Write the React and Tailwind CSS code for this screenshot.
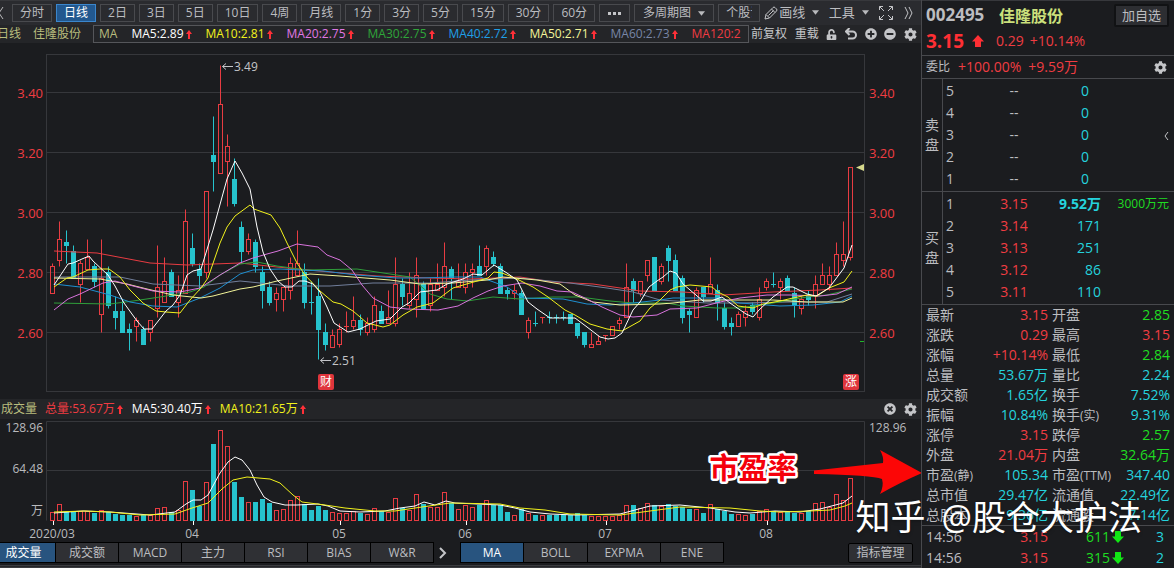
import React from 'react'
import { FaCog, FaMinusCircle, FaPlusCircle, FaTimesCircle, FaUnlockAlt } from 'react-icons/fa'

const UP = '#e83c42'
const DOWN = '#26c3cd'

const periods = ['分时', '日线', '2日', '3日', '5日', '10日', '4周', '月线', '1分', '3分', '5分', '15分', '30分', '60分']

const averages = [
    { label: 'MA5:2.89', color: 'text-white' },
    { label: 'MA10:2.81', color: 'text-[#f2f21c]' },
    { label: 'MA20:2.75', color: 'text-[#e078e4]' },
    { label: 'MA30:2.75', color: 'text-[#2fa53a]' },
    { label: 'MA40:2.72', color: 'text-[#1fa0e8]' },
    { label: 'MA50:2.71', color: 'text-[#f3f59a]' },
    { label: 'MA60:2.73', color: 'text-[#7886a6]' },
]

// [direction, high, body top, body bottom, low, volume bar height]
const candles = [
    [1, 2.83, 2.82, 2.73, 2.73, 8], [1, 2.97, 2.91, 2.84, 2.82, 16], [0, 2.94, 2.9, 2.89, 2.83, 8],
    [0, 2.89, 2.87, 2.78, 2.78, 8], [1, 2.84, 2.83, 2.76, 2.7, 9], [1, 2.91, 2.85, 2.81, 2.81, 9],
    [0, 2.83, 2.82, 2.77, 2.75, 7], [1, 2.91, 2.78, 2.66, 2.6, 10], [0, 2.82, 2.8, 2.69, 2.68, 8],
    [0, 2.72, 2.67, 2.65, 2.61, 6], [0, 2.71, 2.67, 2.6, 2.6, 5], [0, 2.63, 2.61, 2.6, 2.54, 5],
    [1, 2.65, 2.64, 2.62, 2.57, 4], [0, 2.62, 2.61, 2.56, 2.56, 5], [1, 2.64, 2.64, 2.6, 2.57, 5],
    [1, 2.89, 2.75, 2.68, 2.65, 12], [1, 2.85, 2.77, 2.7, 2.7, 13], [0, 2.81, 2.8, 2.72, 2.72, 8],
    [1, 2.79, 2.74, 2.7, 2.65, 10], [1, 3.01, 2.97, 2.73, 2.73, 39], [0, 2.93, 2.88, 2.83, 2.82, 30],
    [0, 2.83, 2.81, 2.79, 2.74, 14], [1, 3.07, 3.07, 2.8, 2.78, 38], [0, 3.32, 3.19, 3.17, 3.07, 76],
    [1, 3.49, 3.36, 3.13, 3.13, 90], [1, 3.26, 3.22, 3.17, 3.02, 74], [0, 3.18, 3.11, 3.03, 3.02, 38],
    [0, 2.97, 2.95, 2.87, 2.83, 23], [1, 2.93, 2.91, 2.87, 2.86, 18], [0, 2.91, 2.9, 2.82, 2.8, 18],
    [0, 2.82, 2.8, 2.74, 2.68, 21], [0, 2.77, 2.75, 2.7, 2.69, 17], [1, 2.75, 2.73, 2.71, 2.67, 10],
    [1, 2.75, 2.75, 2.71, 2.67, 11], [1, 2.85, 2.83, 2.74, 2.71, 20], [1, 2.94, 2.83, 2.79, 2.79, 24],
    [0, 2.83, 2.8, 2.7, 2.68, 16], [0, 2.77, 2.7, 2.7, 2.66, 10], [0, 2.78, 2.72, 2.61, 2.51, 14],
    [0, 2.63, 2.6, 2.56, 2.54, 10], [1, 2.61, 2.59, 2.55, 2.55, 8], [1, 2.63, 2.61, 2.56, 2.55, 7],
    [1, 2.67, 2.62, 2.62, 2.6, 7], [1, 2.72, 2.64, 2.62, 2.61, 9], [0, 2.66, 2.64, 2.61, 2.59, 7],
    [1, 2.65, 2.63, 2.6, 2.59, 6], [1, 2.72, 2.69, 2.61, 2.6, 12], [0, 2.69, 2.67, 2.63, 2.63, 9],
    [1, 2.74, 2.65, 2.63, 2.63, 8], [1, 2.85, 2.76, 2.63, 2.62, 22], [0, 2.78, 2.76, 2.72, 2.69, 12],
    [1, 2.8, 2.73, 2.69, 2.68, 10], [1, 2.85, 2.79, 2.71, 2.65, 26], [0, 2.77, 2.76, 2.68, 2.68, 16],
    [1, 2.78, 2.76, 2.69, 2.67, 13], [1, 2.83, 2.76, 2.74, 2.74, 13], [1, 2.9, 2.82, 2.75, 2.72, 28],
    [0, 2.82, 2.81, 2.78, 2.71, 17], [1, 2.83, 2.77, 2.75, 2.75, 11], [1, 2.83, 2.8, 2.75, 2.73, 15],
    [1, 2.83, 2.81, 2.8, 2.75, 13], [0, 2.89, 2.82, 2.79, 2.79, 15], [1, 2.89, 2.88, 2.82, 2.79, 20],
    [0, 2.87, 2.85, 2.83, 2.82, 15], [0, 2.83, 2.82, 2.73, 2.73, 15], [0, 2.75, 2.74, 2.73, 2.71, 8],
    [1, 2.76, 2.74, 2.73, 2.71, 5], [0, 2.74, 2.73, 2.66, 2.66, 11], [1, 2.65, 2.64, 2.6, 2.58, 7],
    [0, 2.67, 2.63, 2.63, 2.62, 5], [1, 2.65, 2.65, 2.65, 2.63, 5], [0, 2.67, 2.65, 2.65, 2.63, 5],
    [0, 2.66, 2.65, 2.65, 2.63, 5], [0, 2.67, 2.65, 2.65, 2.64, 5], [0, 2.66, 2.66, 2.63, 2.63, 5],
    [0, 2.63, 2.63, 2.59, 2.58, 7], [0, 2.6, 2.6, 2.56, 2.55, 5], [1, 2.6, 2.56, 2.55, 2.55, 4],
    [1, 2.59, 2.57, 2.56, 2.56, 4], [1, 2.59, 2.59, 2.59, 2.57, 4], [1, 2.62, 2.62, 2.59, 2.59, 4],
    [1, 2.65, 2.64, 2.63, 2.61, 5], [1, 2.83, 2.75, 2.65, 2.65, 15], [0, 2.78, 2.77, 2.74, 2.7, 15],
    [1, 2.77, 2.77, 2.73, 2.72, 12], [1, 2.84, 2.84, 2.79, 2.77, 17], [0, 2.85, 2.85, 2.74, 2.74, 15],
    [1, 2.83, 2.82, 2.77, 2.76, 14], [0, 2.89, 2.88, 2.84, 2.77, 16], [0, 2.86, 2.84, 2.74, 2.74, 14],
    [0, 2.79, 2.78, 2.65, 2.63, 13], [0, 2.68, 2.67, 2.66, 2.6, 11], [1, 2.75, 2.74, 2.65, 2.65, 11],
    [0, 2.75, 2.75, 2.72, 2.7, 7], [1, 2.85, 2.76, 2.73, 2.73, 16], [0, 2.76, 2.74, 2.7, 2.64, 11],
    [0, 2.7, 2.68, 2.62, 2.61, 9], [0, 2.65, 2.63, 2.62, 2.59, 6], [1, 2.67, 2.66, 2.62, 2.62, 6],
    [1, 2.69, 2.67, 2.65, 2.62, 5], [0, 2.7, 2.69, 2.67, 2.66, 6], [1, 2.75, 2.71, 2.65, 2.64, 9],
    [1, 2.78, 2.77, 2.75, 2.74, 11], [0, 2.8, 2.76, 2.76, 2.75, 9], [1, 2.78, 2.77, 2.75, 2.71, 8],
    [0, 2.79, 2.78, 2.74, 2.74, 8], [0, 2.75, 2.73, 2.69, 2.65, 7], [1, 2.72, 2.71, 2.68, 2.66, 7],
    [0, 2.74, 2.72, 2.71, 2.69, 9], [1, 2.79, 2.76, 2.72, 2.68, 17], [1, 2.83, 2.79, 2.76, 2.76, 18],
    [1, 2.82, 2.79, 2.76, 2.74, 13], [1, 2.9, 2.86, 2.79, 2.79, 26], [1, 2.97, 2.86, 2.84, 2.82, 20],
    [1, 3.15, 3.15, 2.85, 2.84, 42],
]

const priceLines = [
    { color: '#e83c42', points: '54,251 97,253 150,263 187,265 240,263 277,267 330,272 377,276 430,278 470,279 520,277 553,282 593,284 627,289 640,291 683,292 723,295 773,292 820,290 852,288' },
    { color: '#727f9c', points: '54,277 120,277 153,284 200,286 240,281 290,286 330,286 373,283 430,283 470,280 520,278 570,283 607,288 633,292 660,300 707,303 740,303 790,302 827,302 852,294' },
    { color: '#2f9e3a', points: '54,303 110,304 133,301 160,297 190,292 204,287 220,275 240,264 257,262 277,266 307,270 357,269 390,274 410,277 430,294 447,299 467,301 493,297 520,299 553,297 580,297 610,301 633,303 667,303 683,306 717,308 740,308 773,303 807,297 827,295 852,289' },
    { color: '#1f8fd0', points: '54,284 80,287 110,295 130,302 153,306 177,307 200,298 220,288 240,274 253,270 280,269 323,271 357,275 397,278 420,278 453,277 480,277 507,287 523,298 563,299 587,304 610,305 633,303 660,300 673,298 717,298 740,303 780,306 813,305 840,302 852,296' },
    { color: '#f3f59a', points: '54,278 100,279 127,284 147,289 173,295 201,298 213,296 240,289 253,287 277,281 310,274 340,276 390,280 420,284 453,283 487,280 503,277 537,280 560,284 575,295 593,302 620,305 660,304 673,303 700,300 773,300 807,302 843,302 852,298' },
    { color: '#d873dc', points: '54,310 68,299 80,294 103,283 115,281 133,286 153,291 180,292 200,288 220,275 240,263 253,258 267,254 278,251 297,244 318,247 327,255 340,260 352,270 362,285 373,298 390,307 407,309 438,310 458,306 473,298 488,291 503,286 522,283 540,286 557,291 572,292 587,299 602,307 620,315 633,317 657,315 670,309 697,308 720,302 740,298 767,295 790,295 820,296 837,294 852,287' },
    { color: '#f2f21c', points: '54,287 67,278 73,277 88,270 100,269 109,269 120,277 130,290 143,303 156,311 166,312 180,313 190,300 201,288 208,278 220,243 227,227 235,216 250,205 254,209 271,215 280,228 287,243 297,263 305,275 320,291 333,302 341,304 353,311 367,323 383,327 390,325 403,315 417,307 433,303 453,288 470,283 488,278 494,272 502,273 517,279 533,287 548,297 565,310 575,315 590,324 607,329 622,331 640,321 650,308 660,300 670,290 677,287 690,285 712,287 718,292 728,297 738,306 753,308 763,304 780,301 793,298 807,295 817,296 829,288 844,282 852,271' },
    { color: '#ffffff', points: '54,285 68,264 73,263 82,259 89,256 93,261 108,275 115,286 124,303 137,321 144,329 152,329 166,311 173,305 180,295 187,275 193,271 201,269 213,230 227,179 235,161 242,173 250,189 257,227 263,252 270,269 278,281 285,287 292,287 299,281 305,281 313,284 320,292 327,307 334,323 348,332 360,329 376,321 390,319 402,307 409,303 420,292 437,290 447,284 463,279 473,274 482,275 494,265 507,273 517,280 528,302 537,309 550,318 575,318 587,327 600,337 608,339 615,338 622,333 633,310 640,302 649,287 657,281 663,277 670,271 676,273 683,284 703,301 711,301 722,297 730,303 746,314 753,317 759,310 773,297 787,287 793,287 807,294 816,296 829,288 844,268 852,245' },
]

const volumeLines = [
    { color: '#ffffff', points: '54,513 68,512 83,511 110,512 150,515 175,512 186,504 193,500 201,500 208,495 220,473 228,462 235,457 242,460 250,470 257,485 264,497 272,502 285,505 297,505 318,504 328,506 340,511 360,512 385,511 400,508 415,506 424,502 435,505 446,501 455,503 500,505 515,508 530,512 550,514 575,515 620,514 650,506 680,505 710,508 735,512 750,513 775,511 800,512 820,509 843,503 852,496' },
    { color: '#f2f21c', points: '54,512 85,511 110,512 140,515 175,514 192,508 208,503 222,489 233,480 247,477 270,479 280,483 293,495 302,502 325,505 345,508 375,511 395,511 415,508 450,503 500,504 520,508 545,510 570,514 620,515 650,511 680,507 730,508 760,511 780,512 810,511 830,510 845,506 852,503' },
]

const priceTicks = [3.4, 3.2, 3.0, 2.8, 2.6]
const months = [
    { x: 53, textX: 52, label: '2020/03' },
    { x: 193, textX: 192, label: '04' },
    { x: 340, textX: 339, label: '05' },
    { x: 466, textX: 465, label: '06' },
    { x: 606, textX: 605, label: '07' },
    { x: 767, textX: 766, label: '08' },
]

const indicatorTabs = [
    { label: '成交量', width: 'w-[55px] pr-2', active: true },
    { label: '成交额', width: 'w-[62px]' },
    { label: 'MACD', width: 'w-[62px]' },
    { label: '主力', width: 'w-[62px]' },
    { label: 'RSI', width: 'w-[62px]' },
    { label: 'BIAS', width: 'w-[62px]' },
    { label: 'W&R', width: 'w-[62px]' },
]
const overlayTabs = [
    { label: 'MA', width: 'w-[62px]', active: true },
    { label: 'BOLL', width: 'w-[63px]' },
    { label: 'EXPMA', width: 'w-[72px]' },
    { label: 'ENE', width: 'w-[62px]' },
]

const R = 'text-[#f03c42]'
const G = 'text-[#1fdc22]'
const C = 'text-[#25d3dd]'

const asks = [5, 4, 3, 2, 1].map((level) => ({ level, price: '--', volume: '0' }))
const bids = [
    { level: 1, price: '3.15', volume: '9.52万', note: '3000万元' },
    { level: 2, price: '3.14', volume: '171' },
    { level: 3, price: '3.13', volume: '251' },
    { level: 4, price: '3.12', volume: '86' },
    { level: 5, price: '3.11', volume: '110' },
]

const stats = [
    [['最新', '3.15', R], ['开盘', '2.85', G]],
    [['涨跌', '0.29', R], ['最高', '3.15', R]],
    [['涨幅', '+10.14%', R], ['最低', '2.84', G]],
    [['总量', '53.67万', C], ['量比', '2.24', C]],
    [['成交额', '1.65亿', C], ['换手', '7.52%', C]],
    [['振幅', '10.84%', C], ['换手', '9.31%', C, '(实)']],
    [['涨停', '3.15', R], ['跌停', '2.57', G]],
    [['外盘', '21.04万', R], ['内盘', '32.64万', G]],
    [['市盈', '105.34', C, '(静)'], ['市盈', '347.40', C, '(TTM)']],
    [['总市值', '29.47亿', C], ['流通值', '22.49亿', C]],
    [['总股本', '9.36亿', C], ['流通股', '7.14亿', C]],
]

const trades = [
    ['14:56', '3.15', '611', '3'],
    ['14:56', '3.15', '315', '2'],
]

const candleX = (i) => 52.5 + i * 7
const priceY = (p) => Math.round(92 + (3.4 - p) * 300) + 0.5

const ArrowUp = () => (
    <svg viewBox='0 0 6 9' className='w-[6px] h-[9px] ml-[2px] shrink-0 fill-[#ff3038]'>
        <path d='M3 0 6 4H4V9H2V4H0Z' />
    </svg>
)

const BlockArrow = ({ className }) => (
    <svg viewBox='0 0 12 12' className={`shrink-0 ${className}`}>
        <path d='M6 0 12 6.5H9V12H3V6.5H0Z' />
    </svg>
)

const Caret = () => (
    <svg viewBox='0 0 8 5' className='w-[7px] h-[5px] ml-[7px] fill-[#b9babd]'>
        <path d='M0 0H8L4 5Z' />
    </svg>
)

const Toolbar = () => (
    <div className='flex items-center h-[25px] bg-[#2a2b2f] border-t border-[#37383c] overflow-hidden whitespace-nowrap'>
        <button className='w-3 shrink-0' aria-label='后退'>
            <svg viewBox='0 0 12 16' className='w-3 h-4 fill-none stroke-[#b9babd]'>
                <path d='M3 2 -1 8 3 14' />
            </svg>
        </button>
        <div className='flex gap-1 min-w-0 overflow-hidden'>
            {periods.map((p) => (
                <button
                    key={p}
                    className={`h-[18px] px-[7px] border leading-4 shrink-0 ${
                        p === '日线' ? 'bg-[#22588f] border-[#3b86cc] text-white' : 'border-[#494a4e]'
                    }`}
                >
                    {p}
                </button>
            ))}
            <button className='flex items-center justify-center gap-[2px] w-[31px] h-[18px] border border-[#494a4e] shrink-0' aria-label='更多周期'>
                <i className='size-[3px] bg-[#c4c5c8]' />
                <i className='size-[3px] bg-[#c4c5c8]' />
                <i className='size-[3px] bg-[#c4c5c8]' />
            </button>
            <button className='flex items-center h-[18px] px-2 border border-[#494a4e] leading-4 shrink-0'>
                多周期图
                <Caret />
            </button>
            <button className='w-[42px] h-[18px] px-[7px] border border-[#494a4e] leading-4 text-left shrink-0'>
                <span className='block overflow-hidden'>个股诊断</span>
            </button>
        </div>
        <div className='flex flex-1 items-center justify-between pl-1 pr-2 text-[13px] shrink-0'>
            <button className='flex items-center'>
                <svg viewBox='0 0 14 14' className='size-[14px] mr-[1px] fill-none stroke-[#c4c5c8]'>
                    <path d='M1 13 2 8.500 9 1.500Q10 .5 11 1.500L12.500 3Q13.500 4 12.500 5L5.500 12ZM2 8.500 5.500 12M7.500 3 11 6.500M4.500 9.500 9.500 4.500' />
                </svg>
                画线
                <Caret />
            </button>
            <button className='flex items-center'>
                工具
                <Caret />
            </button>
            <button aria-label='全屏'>
                <svg viewBox='0 0 16 16' className='size-4 fill-none stroke-[#c4c5c8]'>
                    <path d='M1.500 5V1.500H5M11 1.500H14.500V5M14.500 11V14.500H11M5 14.500H1.500V11M1.500 1.500 6 6M14.500 1.500 10 6M14.500 14.500 10 10M1.500 14.500 6 10' />
                </svg>
            </button>
            <button aria-label='展开'>
                <svg viewBox='0 0 9 12' className='w-[9px] h-3 fill-none stroke-[#c4c5c8]'>
                    <path d='M1 0 4 6 1 12M5 0 8 6 5 12' />
                </svg>
            </button>
        </div>
    </div>
)

const AverageBar = () => (
    <div className='flex h-[18px] bg-[#242528] leading-[18px] whitespace-nowrap overflow-hidden'>
        <div className='flex justify-end gap-3 w-[93px] pr-3 shrink-0 text-[#b9bd7e]'>
            <span>日线</span>
            <span>佳隆股份</span>
        </div>
        <div className='flex flex-1 gap-[14px] min-w-0 pl-[5px] border border-[#55565a] leading-4 overflow-hidden'>
            <span className='text-[#b9bd7e]'>MA</span>
            {averages.map((a) => (
                <span key={a.label} className={`flex items-center shrink-0 ${a.color}`}>
                    {a.label}
                    <ArrowUp />
                </span>
            ))}
            <span className={R}>MA120:2</span>
        </div>
        <div className='flex items-center justify-between w-[172px] pl-[2px] pr-1 shrink-0 text-[#c4c5c8]'>
            <button>前复权</button>
            <button>重载</button>
            <button aria-label='锁定'><FaUnlockAlt size={11} /></button>
            <button aria-label='撤销'>
                <svg viewBox='0 0 12 12' className='size-3 fill-none stroke-[#c4c5c8] stroke-2'>
                    <path d='M1 3.500H7.500A3.500 3.500 0 0 1 7.500 10.500H3M4.500 0 1 3.500 4.500 7' />
                </svg>
            </button>
            <button aria-label='放大'><FaPlusCircle size={12} /></button>
            <button aria-label='缩小'><FaMinusCircle size={12} /></button>
            <button aria-label='设置'><FaCog size={13} /></button>
        </div>
    </div>
)

const Badge = ({ x, children }) => (
    <g>
        <rect x={x} y='374' width='16' height='16' rx='2' fill='#e0353c' />
        <text x={x + 8} y='386' fontSize='12' fill='#fff' textAnchor='middle'>{children}</text>
    </g>
)

const PriceChart = () => (
    <svg viewBox='0 43 921 356' className='block w-full'>
        <g fill='none' stroke='#36373b'>
            <rect x='46.5' y='54.5' width='818' height='337' />
            {priceTicks.map((p) => (
                <line key={p} x1='47' x2='864' y1={priceY(p)} y2={priceY(p)} />
            ))}
        </g>
        <g fontSize='13' fill='#f03c42'>
            {priceTicks.map((p) => (
                <React.Fragment key={p}>
                    <text x='43' y={priceY(p) + 5} textAnchor='end'>{p.toFixed(2)}</text>
                    <text x='869' y={priceY(p) + 5}>{p.toFixed(2)}</text>
                </React.Fragment>
            ))}
        </g>
        {candles.map(([up, high, top, bottom, low], i) => {
            const x = candleX(i)
            const y1 = priceY(top)
            const y2 = priceY(bottom)
            return (
                <g key={i} stroke={up ? UP : DOWN}>
                    <path d={`M${x} ${priceY(high)}V${y1}M${x} ${y2}V${priceY(low)}`} />
                    {top === bottom ? (
                        <path d={`M${x - 2.5} ${y1}h5`} />
                    ) : (
                        <rect x={x - 2} y={y1} width='4' height={y2 - y1} fill={up ? 'none' : DOWN} />
                    )}
                </g>
            )
        })}
        {priceLines.map((l) => (
            <polyline key={l.color} points={l.points} fill='none' stroke={l.color} />
        ))}
        <g fill='none' stroke='#c4c5c8'>
            <path d='M222.5 66.5H233M226 63.5 222.5 66.5 226 69.5M320.5 360.5H331M324 357.5 320.5 360.5 324 363.5' />
        </g>
        <g fontSize='12' fill='#c4c5c8'>
            <text x='234' y='71'>3.49</text>
            <text x='332' y='365'>2.51</text>
        </g>
        <path d='M856 167.5 864 164V171Z' fill='#d5d88c' />
        <path d='M860 341.5H864' stroke='#1fb52a' />
        <Badge x={318}>财</Badge>
        <Badge x={843}>涨</Badge>
    </svg>
)

const VolumeChart = () => (
    <svg viewBox='0 419 921 123' className='block w-full overflow-visible'>
        <g fill='none' stroke='#36373b'>
            <path d='M46.5 520.5V421.5H864.5V520.5M47 470.5H864' />
        </g>
        {candles.map(([up, , , , , volume], i) => (
            <rect
                key={i}
                x={candleX(i) - 2}
                y={520.5 - volume}
                width='4'
                height={volume}
                fill={up ? 'none' : DOWN}
                stroke={up ? UP : DOWN}
            />
        ))}
        {volumeLines.map((l) => (
            <polyline key={l.color} points={l.points} fill='none' stroke={l.color} />
        ))}
        <g fontSize='12' fill='#b9babd'>
            <text x='43' y='432' textAnchor='end'>128.96</text>
            <text x='43' y='473' textAnchor='end'>64.48</text>
            <text x='43' y='515' textAnchor='end'>万</text>
            <text x='869' y='432'>128.96</text>
            {months.map((m) => (
                <text key={m.label} x={m.textX} y='538' textAnchor='middle'>{m.label}</text>
            ))}
        </g>
        <path d={months.map((m) => `M${m.x + 0.5} 521V525`).join('')} stroke='#fff' />
        <text
            x='753'
            y='479'
            fontSize='29'
            fontWeight='700'
            fill='#f5000c'
            stroke='#fff'
            strokeWidth='5'
            strokeLinejoin='round'
            paintOrder='stroke'
            textAnchor='middle'
        >
            市盈率
        </text>
        <path d='M814 470.5 883 463Q884 457 880 450L922 473Q899 483 880 494Q884 486 882 479Q872 475 814 474Z' fill='#fc0606' />
    </svg>
)

const VolumeHeader = () => (
    <div className='flex items-center h-5 pl-[1px] pr-1 bg-[#242528] leading-5 whitespace-nowrap text-[#c4c5c8]'>
        <span className='mr-2 text-[#b9bd7e]'>成交量</span>
        <span className={`flex items-center mr-[9px] ${R}`}>总量:53.67万<ArrowUp /></span>
        <span className='flex items-center mr-[9px] text-white'>MA5:30.40万<ArrowUp /></span>
        <span className='flex items-center text-[#f2f21c]'>MA10:21.65万<ArrowUp /></span>
        <button className='ml-auto' aria-label='关闭'><FaTimesCircle size={12} /></button>
        <button className='ml-2' aria-label='指标设置'><FaCog size={13} /></button>
    </div>
)

const Tab = ({ label, width, active }) => (
    <button
        className={`h-[19px] leading-[19px] ${width} ${
            active ? 'bg-[#28547f] text-white' : 'bg-[#2f3034]'
        }`}
    >
        {label}
    </button>
)

const IndicatorTabs = () => (
    <div className='flex items-center h-[21px] pr-2'>
        <div className='flex gap-[1px] py-[1px] pr-[1px] bg-black'>
            {indicatorTabs.map((t) => <Tab key={t.label} {...t} />)}
        </div>
        <button className='flex justify-center w-[26px] pr-[9px]' aria-label='更多指标'>
            <svg viewBox='0 0 8 12' className='w-2 h-3 fill-none stroke-[#c4c5c8] stroke-2'>
                <path d='M1 1 6 6 1 11' />
            </svg>
        </button>
        <div className='flex gap-[1px] p-[1px] bg-black'>
            {overlayTabs.map((t) => <Tab key={t.label} {...t} />)}
        </div>
        <button className='ml-auto w-[65px] h-5 bg-[#2f3034] border border-black rounded-xs leading-[18px]'>
            指标管理
        </button>
    </div>
)

const OrderBook = ({ side, rows }) => (
    <div className='flex border-t border-[#48494d]'>
        <div className='flex flex-col items-center justify-center w-[21px] text-sm leading-5 border-r border-[#48494d]'>
            {side.split('').map((ch) => <span key={ch}>{ch}</span>)}
        </div>
        <table className='flex-1 table-fixed my-[1px] text-sm leading-[22px]'>
            <tbody>
                {rows.map((r) => (
                    <tr key={r.level}>
                        <td className='w-[50px] pl-[3px]'>{r.level}</td>
                        <td className={`w-[42px] text-center ${r.price === '--' ? '' : R}`}>{r.price}</td>
                        <td className={`w-[66px] text-right ${r.volume === '0' ? 'pr-3' : ''} ${r.note ? 'font-bold' : ''} ${C}`}>
                            {r.volume}
                        </td>
                        <td className={`pr-[5px] text-right text-xs ${G}`}>
                            {r.note}
                            {side === '卖盘' && r.level === 3 && (
                                <button className='align-middle' aria-label='收起'>
                                    <svg viewBox='0 0 5 8' className='w-[5px] h-2 fill-none stroke-[#c4c5c8]'>
                                        <path d='M4 0 1 4 4 8' />
                                    </svg>
                                </button>
                            )}
                        </td>
                    </tr>
                ))}
            </tbody>
        </table>
    </div>
)

const QuotePanel = () => (
    <aside className='w-[253px] shrink-0 border-l border-[#48494d] whitespace-nowrap'>
        <div className='flex items-center h-[30px] pl-1 pr-[5px] border-t border-[#37383c]'>
            <h2 className='w-[73px] text-[17px] font-bold'>002495</h2>
            <h1 className='text-base font-bold text-[#cbe07c]'>佳隆股份</h1>
            <button className='ml-auto w-[55px] h-[23px] bg-[#2d2e32] border-2 border-[#111214] rounded-xs text-[13px] leading-[19px]'>
                加自选
            </button>
        </div>
        <div className={`flex items-center h-[25px] pb-1 pl-1 text-sm ${R}`}>
            <strong className='text-[19px] leading-5 text-[#ff2f34]'>3.15</strong>
            <BlockArrow className='size-3 ml-2 mr-3 fill-[#ff2f34]' />
            <span className='mr-[6px]'>0.29</span>
            <span>+10.14%</span>
        </div>
        <div className='flex items-center h-[23px] pl-1 pr-[7px] border-t border-[#48494d] text-sm'>
            <span className='mr-2 text-xs'>委比</span>
            <span className={`mr-[7px] ${R}`}>+100.00%</span>
            <span className={R}>+9.59万</span>
            <button className='ml-auto text-[#c4c5c8]' aria-label='盘口设置'><FaCog size={13} /></button>
        </div>
        <OrderBook side='卖盘' rows={asks} />
        <OrderBook side='买盘' rows={bids} />
        <table className='w-full table-fixed border-t border-[#48494d] text-sm leading-5'>
            <tbody>
                {stats.map((row) => (
                    <tr key={row[0][0] + row[0][1]}>
                        {row.map(([label, value, color, suffix], i) => (
                            <React.Fragment key={label + i}>
                                <th scope='row' className={`pl-1 text-left font-normal ${i ? 'w-[62px]' : 'w-[56px]'}`}>
                                    {label}
                                    {suffix && <span className='text-xs leading-none'>{suffix}</span>}
                                </th>
                                <td className={`text-right ${i ? 'pr-1' : 'w-[70px]'} ${color}`}>{value}</td>
                            </React.Fragment>
                        ))}
                    </tr>
                ))}
            </tbody>
        </table>
        <table className='w-full table-fixed border-t border-[#48494d] text-sm leading-[21px]'>
            <tbody>
                {trades.map(([time, price, volume, count]) => (
                    <tr key={volume}>
                        <td className='w-[56px] pl-1'>{time}</td>
                        <td className={`w-[70px] text-right ${R}`}>{price}</td>
                        <td className={`w-[76px] ${G}`}>
                            <div className='flex items-center justify-end gap-[2px]'>
                                {volume}
                                <BlockArrow className='size-3 rotate-180 fill-[#12e615]' />
                            </div>
                        </td>
                        <td className={`pr-[10px] text-right ${C}`}>{count}</td>
                    </tr>
                ))}
            </tbody>
        </table>
    </aside>
)

const App = () => {
    return (
        <div className="relative flex min-h-screen overflow-hidden bg-[#1b1c1f] text-xs text-[#bcbdc0] font-['Open_Sans','Noto_Sans_CJK_SC',sans-serif]">
            <main className='flex-1 min-w-0'>
                <Toolbar />
                <AverageBar />
                <PriceChart />
                <VolumeHeader />
                <VolumeChart />
                <IndicatorTabs />
                <div className='mt-[2px] h-[3px] border-y border-[#3a3b3f] bg-[#242528]' />
            </main>
            <QuotePanel />
            <div className='absolute right-8 bottom-7 flex gap-4 text-[34px] leading-[46px] text-white whitespace-nowrap pointer-events-none text-shadow-md'>
                <span className='text-[35px]'>知乎</span>
                <span>@股仓大护法</span>
            </div>
        </div>
    )
}

export default App
